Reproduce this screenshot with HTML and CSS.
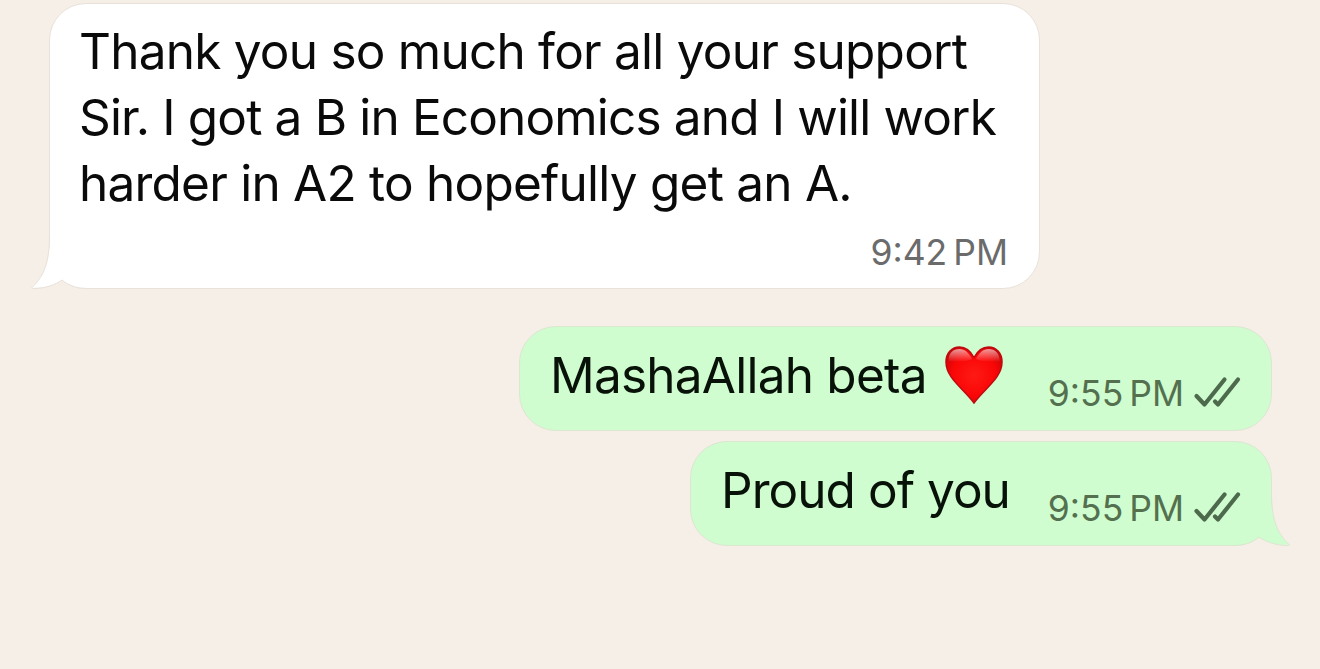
FILE: index.html
```
<!DOCTYPE html>
<html lang="en">
  <head>
    <meta charset="utf-8">
    <meta name="viewport" content="width=device-width, initial-scale=1">
    <title>Chat</title>
    <link rel="stylesheet" href="styles.css">
  </head>
  <body>
    <main class="chat">
      <!-- Incoming message -->
      <div class="bubble incoming">
        <p class="text">
          <span class="line">Thank you so much for all your support</span>
          <span class="line wide">Sir. I got a B in Economics and I will work</span>
          <span class="line">harder in A2 to hopefully get an A.</span>
        </p>
        <div class="meta"><span class="time">9:42<span class="period">PM</span></span></div>
        <svg class="tail" width="62" height="56" viewBox="0 0 62 56">
          <path class="tail-fill" d="M19 0C19 27 14 41 1 53.500C14 55 25 50.500 31 46C38 52 46 54.500 58 54.500L62 54.500V0Z"></path>
          <path class="tail-line" d="M18.500 0C18.500 27 14 41 1 53.500C.3 54.500 1 54.500 3 54.500C14 54.500 25 50.500 31 46C38 52 46 54.500 58 54.500H62"></path>
        </svg>
      </div>

      <!-- Outgoing messages -->
      <div class="bubble outgoing first">
        <p class="text">MashaAllah beta</p>
        <svg class="heart" width="60" height="60" viewBox="0 0 60 60">
          <defs>
            <radialGradient id="heart-red" cx="50%" cy="50%" r="60%">
              <stop offset="0" stop-color="#ff1a14"></stop>
              <stop offset=".65" stop-color="#f90606"></stop>
              <stop offset="1" stop-color="#c80406"></stop>
            </radialGradient>
            <linearGradient id="heart-shine" x1="0" y1="0" x2="0" y2="1">
              <stop offset="0" stop-color="#fff" stop-opacity=".6"></stop>
              <stop offset="1" stop-color="#fff" stop-opacity="0"></stop>
            </linearGradient>
          </defs>
          <path d="M30 12.500C26 5 20.500 2 15.500 2C8 2 2 8 2 17C2 33 19 43 30 58C41 43 58 33 58 17C58 8 52 2 44.500 2C39.500 2 34 5 30 12.500Z" fill="url(#heart-red)" stroke="#bd0b10" stroke-width="1.500"></path>
          <path d="M4.500 17C4 8 9 4 15.500 4C21 4 25 8 28 14C20 18 12 16 4.500 17Z" fill="url(#heart-shine)"></path>
          <path d="M55.500 17C56 8 51 4 44.500 4C39 4 35 8 32 14C40 18 48 16 55.500 17Z" fill="url(#heart-shine)"></path>
        </svg>
        <div class="meta">
          <span class="time">9:55<span class="period">PM</span></span>
          <svg class="checks" width="48" height="34" viewBox="0 0 48 34">
            <path d="M3.500 20L11.500 28.500L31.500 3.500"></path>
            <path d="M22 25.500L25 28.500L45 3.500"></path>
          </svg>
        </div>
      </div>

      <div class="bubble outgoing second">
        <p class="text proud">Proud of you</p>
        <div class="meta">
          <span class="time">9:55<span class="period">PM</span></span>
          <svg class="checks" width="48" height="34" viewBox="0 0 48 34">
            <path d="M3.500 20L11.500 28.500L31.500 3.500"></path>
            <path d="M22 25.500L25 28.500L45 3.500"></path>
          </svg>
        </div>
        <svg class="tail" width="62" height="56" viewBox="0 0 62 56">
          <path class="tail-fill" d="M19 0C19 27 14 41 1 53.500C14 55 25 50.500 31 46C38 52 46 54.500 58 54.500L62 54.500V0Z"></path>
          <path class="tail-line" d="M18.500 0C18.500 27 14 41 1 53.500C.3 54.500 1 54.500 3 54.500C14 54.500 25 50.500 31 46C38 52 46 54.500 58 54.500H62"></path>
        </svg>
      </div>
    </main>
  </body>
</html>
```
FILE: styles.css
```
body, html {
  margin: 0;
  padding: 0;
  height: 100%;
  width: 100%;
  overflow: hidden;
  background-color: #f6efe8;
  font-family: Inter, "Liberation Sans", sans-serif;
}

.chat {
  display: flex;
  flex-direction: column;
  padding: 3px 48px 0 49px;
}

.bubble {
  position: relative;
  box-sizing: border-box;
  border: 1px solid;
  border-radius: 37px;
  display: flex;
}

.incoming {
  align-self: flex-start;
  flex-direction: column;
  width: 991px;
  height: 286px;
  padding: 14px 31px 0 29px;
  background-color: #fff;
  border-color: #e8e2da;
}

.outgoing {
  align-self: flex-end;
  height: 105px;
  padding: 15px 30px 0 30px;
  background-color: #cffdcf;
  border-color: #dbe7cf;
}

.first {
  width: 753px;
  margin-top: 37px;
}

.second {
  width: 582px;
  margin-top: 10px;
}

.text {
  margin: 0;
  font-size: 49.5px;
  line-height: 66px;
  letter-spacing: -0.77px;
  color: #0a0a0a;
  white-space: nowrap;
}

.line {
  display: block;
}

.wide {
  letter-spacing: -0.84px;
}

.proud {
  letter-spacing: -0.95px;
}

.outgoing .text {
  color: #081208;
}

.meta {
  position: relative;
  z-index: 1;
  display: flex;
  align-items: flex-start;
  margin-left: auto;
}

.incoming .meta {
  margin-top: 15px;
}

.outgoing .meta {
  margin-top: 30px;
}

.time {
  font-size: 35.5px;
  line-height: 44px;
  color: #6b6b6b;
  white-space: nowrap;
}

.outgoing .time {
  color: #54704f;
}

.period {
  margin-left: 6px;
}

.heart {
  margin: 3px 0 0 17px;
}

.checks {
  margin: 4px 0 0 9px;
  fill: none;
  stroke: #4d6b4c;
  stroke-width: 4.2;
  stroke-linecap: round;
  stroke-linejoin: round;
}

/* Tail is drawn over the corner of the bubble */
.tail {
  position: absolute;
  left: -19px;
  bottom: -2px;
}

.tail-fill {
  fill: #fff;
}

.tail-line {
  fill: none;
  stroke: #e8e2da;
}

.outgoing .tail {
  left: auto;
  right: -19px;
  transform: scaleX(-1);
}

.outgoing .tail-fill {
  fill: #cffdcf;
}

.outgoing .tail-line {
  stroke: #dbe7cf;
}
```
